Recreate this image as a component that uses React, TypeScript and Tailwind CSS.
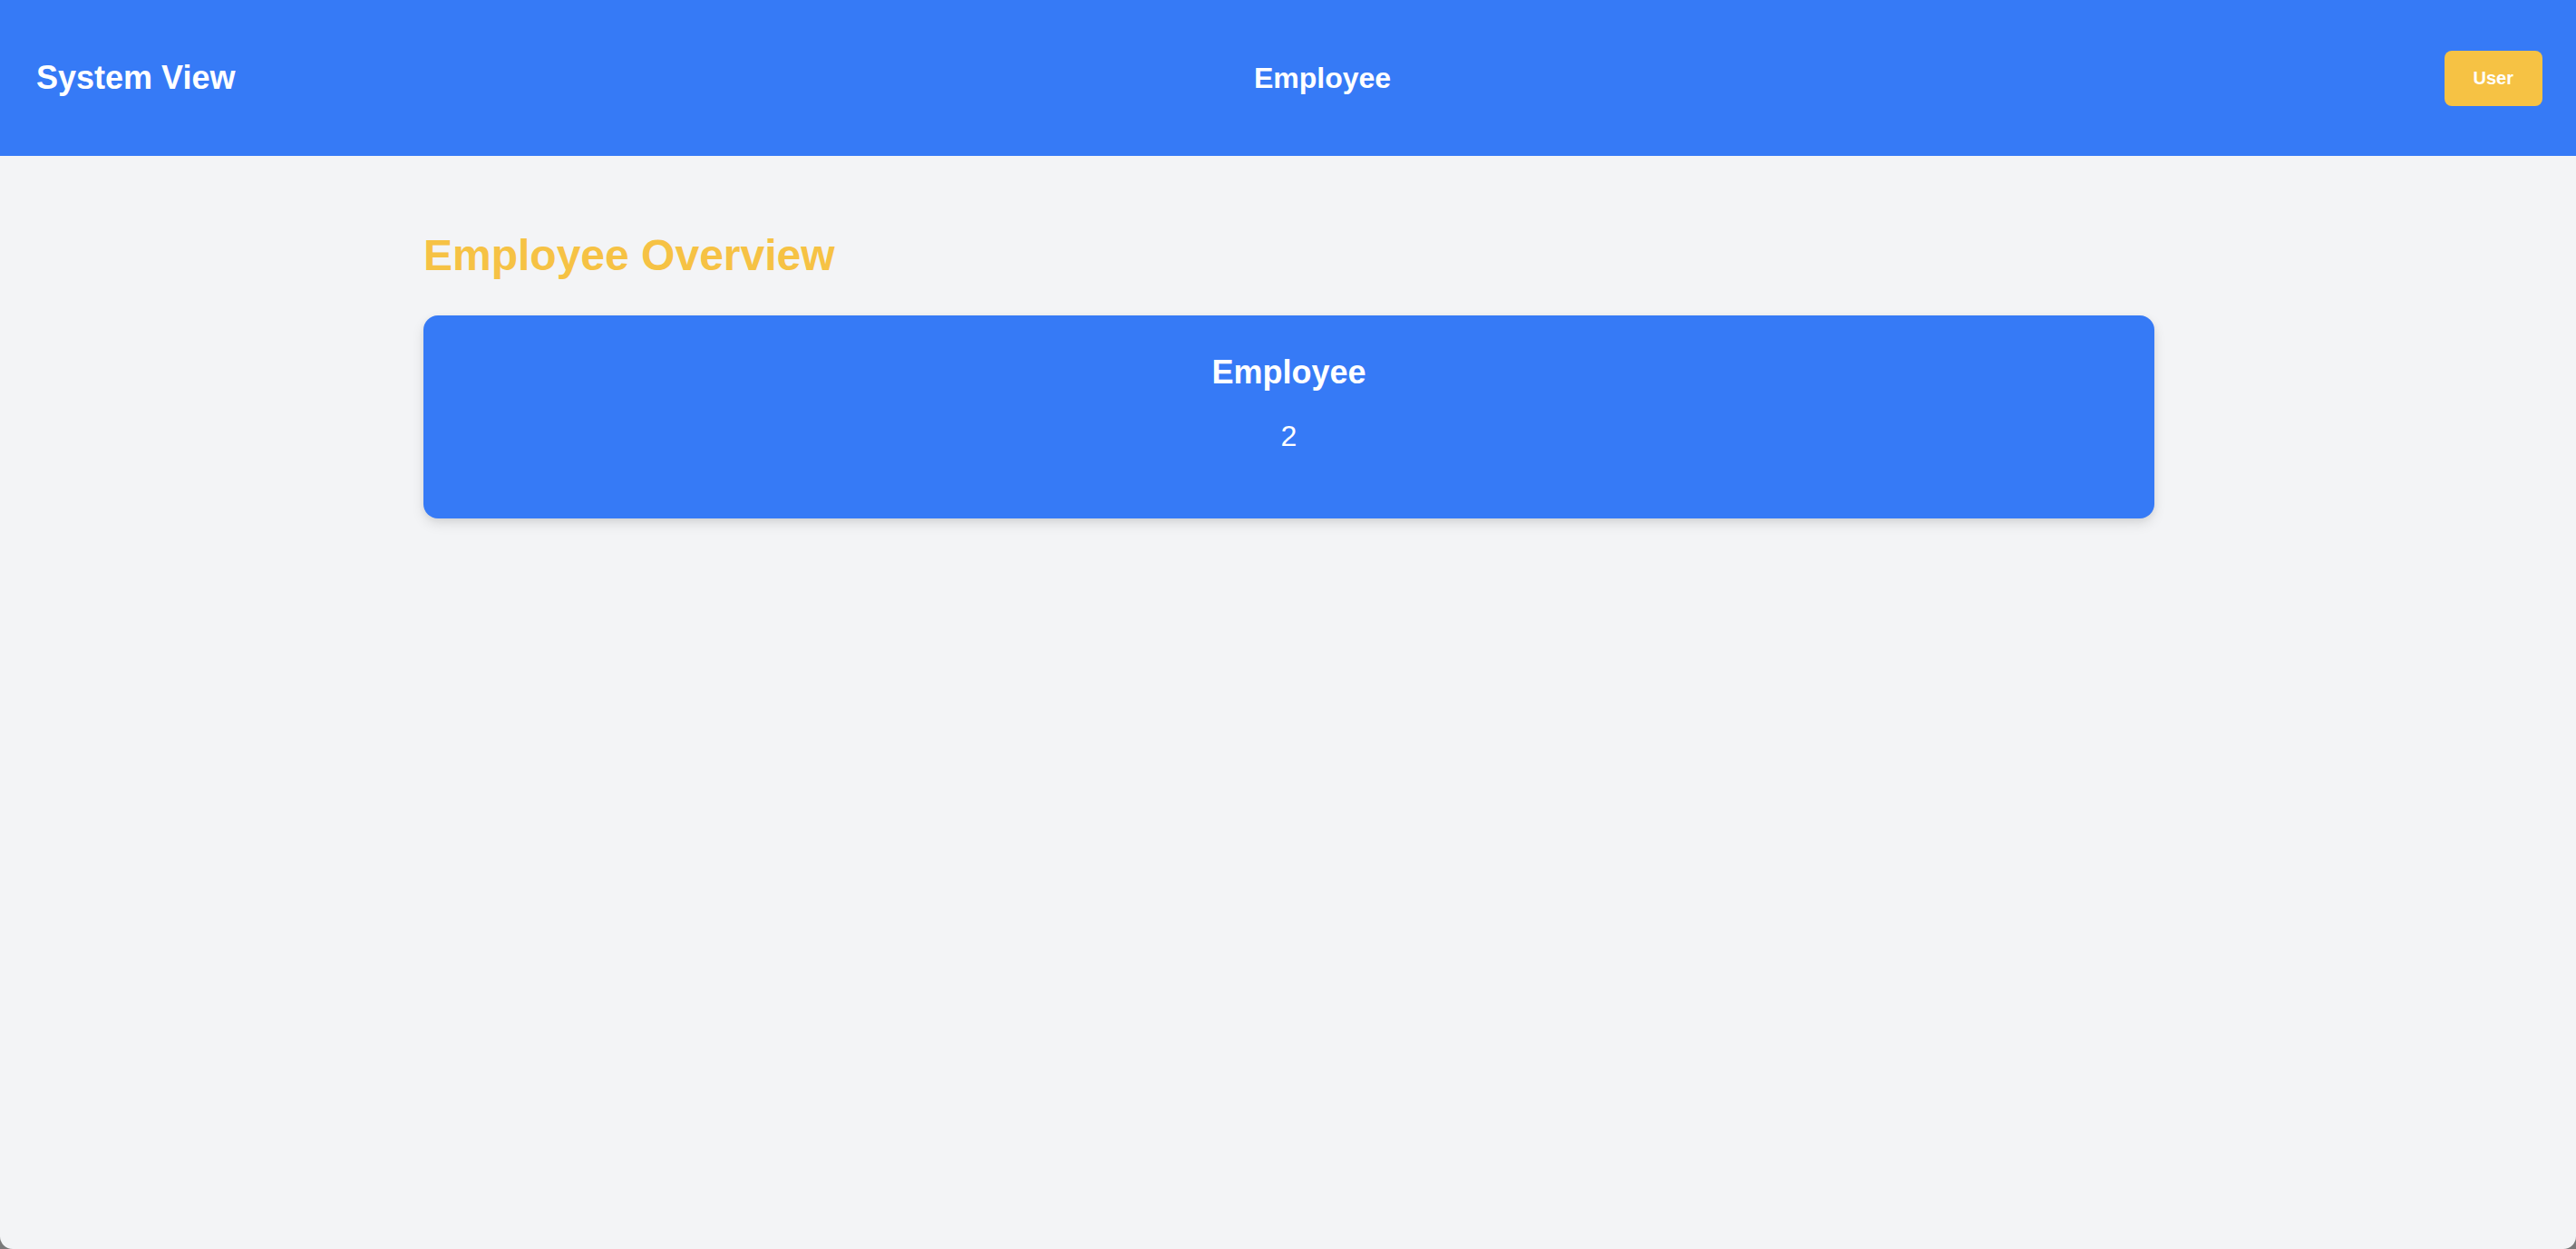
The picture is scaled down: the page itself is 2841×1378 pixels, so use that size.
import React from "react";

export default function App() {
  return (
    <div className="h-screen w-full bg-[#7a7a7a]" style={{ fontFamily: '"Liberation Sans", Arial, sans-serif' }}>
      <div className="flex h-full w-full flex-col overflow-hidden rounded-b-[14px] bg-[#f3f4f6]">
        <header className="flex h-[172px] shrink-0 items-center bg-[#367af6] pl-[40px] pr-[37px] text-white">
          <div className="flex-1 text-[36px] font-bold leading-[56px]">System View</div>
          <div className="ml-[73px] text-[32px] font-bold leading-[48px]">Employee</div>
          <div className="flex flex-1 justify-end">
            <button className="h-[61px] rounded-[8px] bg-[#f6c244] px-[32px] text-[20px] font-bold text-white">
              User
            </button>
          </div>
        </header>
        <main className="ml-[467px] w-[1909px] pt-[78px]">
          <h1 className="mb-[34px] text-[48px] font-bold leading-[64px] text-[#f6c244]">Employee Overview</h1>
          <div className="flex h-[224px] flex-col items-center rounded-[16px] bg-[#367af6] pt-[35px] text-white shadow-[0_6px_14px_rgba(0,0,0,0.1),0_2px_6px_rgba(0,0,0,0.06)]">
            <h2 className="text-[36px] font-bold leading-[56px]">Employee</h2>
            <p className="mt-[18px] text-[32px] leading-[48px]">2</p>
          </div>
        </main>
      </div>
    </div>
  );
}
